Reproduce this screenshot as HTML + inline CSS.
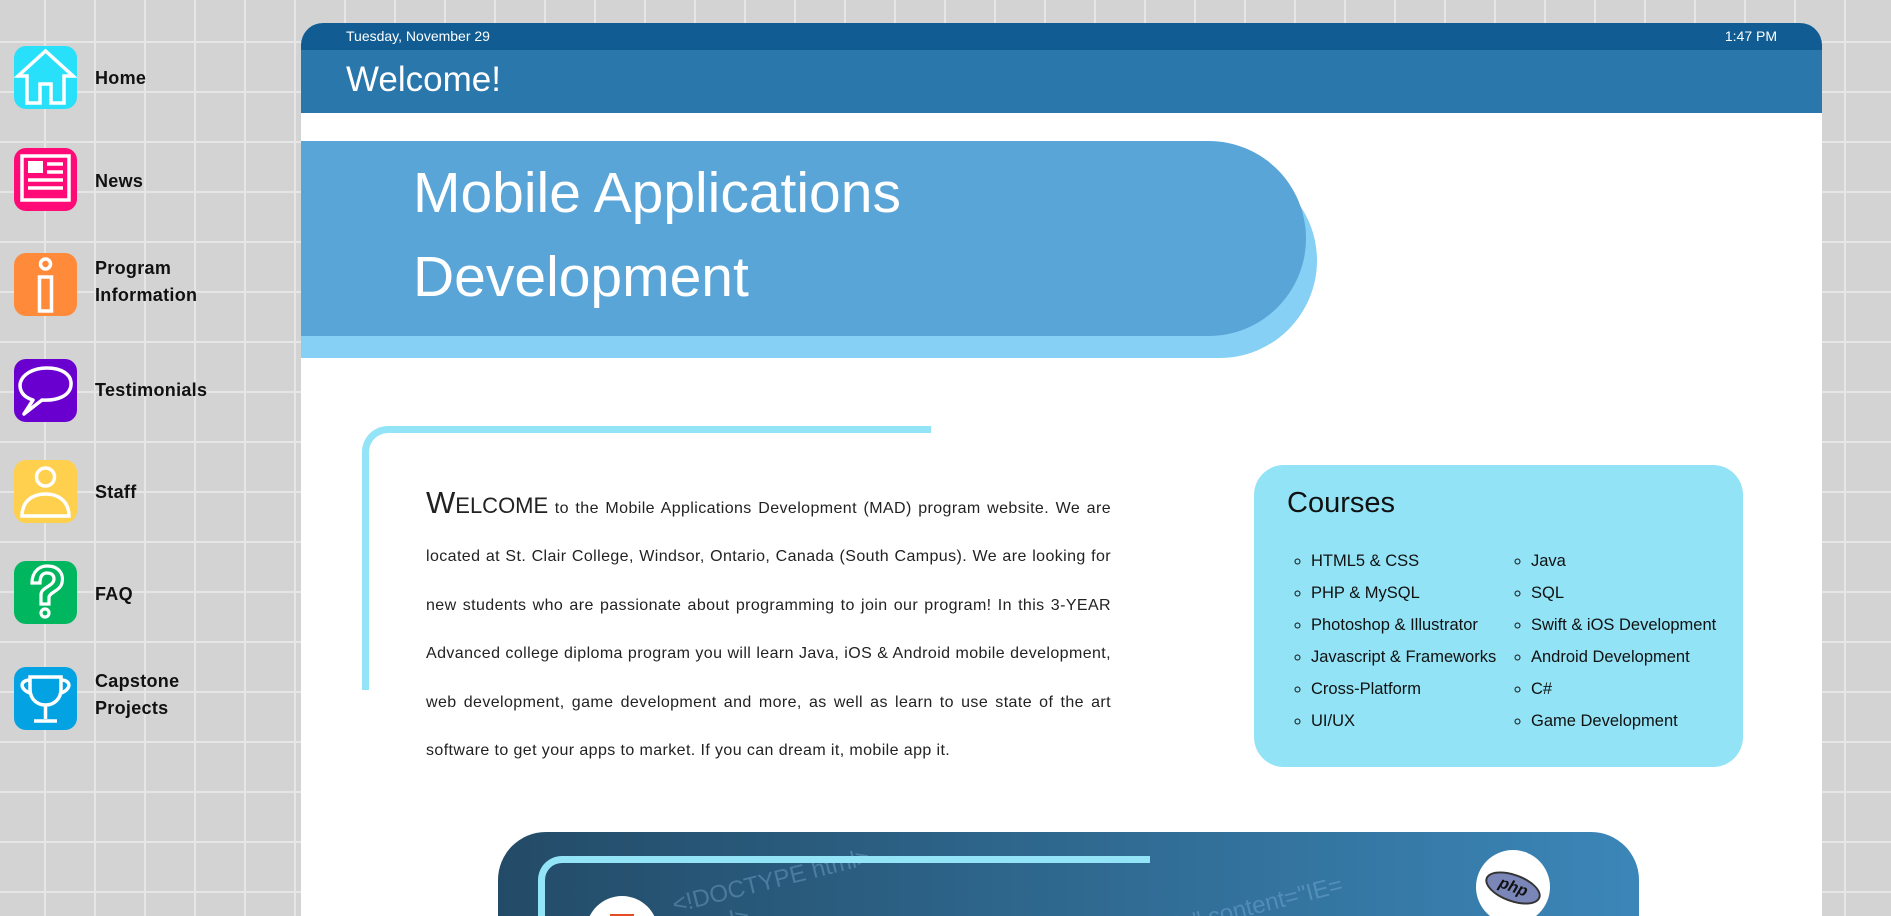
<!DOCTYPE html>
<html><head><meta charset="utf-8"><style>
*{margin:0;padding:0;box-sizing:border-box}
html,body{width:1891px;height:916px;overflow:hidden}
body{font-family:"Liberation Sans",sans-serif;background-color:#d3d3d3;
background-image:linear-gradient(90deg,#e6e6e6 2px,transparent 2px),linear-gradient(#e6e6e6 2px,transparent 2px);
background-size:50px 50px;background-position:44px 41px;position:relative}
.nav{position:absolute;left:14px;width:280px}
.nav .ic{position:absolute;left:0;width:63px;height:63px;border-radius:12px}
.nav .lb{position:absolute;left:81px;font-weight:bold;font-size:18px;line-height:27px;color:#111;white-space:nowrap;letter-spacing:0.3px}
.panel{position:absolute;left:301px;top:23px;width:1521px;height:893px;background:#fff;border-radius:22px 22px 0 0;overflow:hidden}
.datebar{height:27px;background:#115d93;color:#fff;font-size:14px;line-height:27px;padding:0 45px}
.head{height:63px;background:#2a77ab;color:#fff;font-size:35px;padding-left:45px;line-height:60px}
.bshadow{position:absolute;left:0;top:140px;width:1016px;height:195px;background:#86d0f5;border-radius:0 98px 98px 0}
.banner{position:absolute;left:0;top:118px;width:1005px;height:195px;background:#59a5d7;border-radius:0 98px 98px 0;color:#fff;font-size:57px;line-height:84px;padding:10px 0 0 112px}
.wel{position:absolute;left:61px;top:403px;width:569px;height:264px;border-top:7px solid #93e4f6;border-left:7px solid #93e4f6;border-radius:26px 0 0 0}
.wtext{position:absolute;left:125px;top:456px;width:685px;font-size:16px;letter-spacing:0.4px;line-height:48.4px;text-align:justify;color:#222}
.wtext .big{font-size:31px;letter-spacing:0}
.courses{position:absolute;left:953px;top:442px;width:489px;height:302px;background:#91e3f5;border-radius:30px;padding:22px 0 0 33px}
.courses h2{font-weight:normal;font-size:29px;color:#111;margin-bottom:12px}
.courses ul{position:absolute;top:80px;list-style:circle;font-size:16.5px;line-height:32px;color:#111}
.img{position:absolute;left:197px;top:809px;width:1141px;height:84px;border-radius:48px 48px 0 0;background:linear-gradient(90deg,#234b67,#3b86b8);overflow:hidden}
.img .ln{position:absolute;left:40px;top:24px;width:612px;height:200px;border-top:7px solid #93e4f6;border-left:7px solid #93e4f6;border-radius:24px 0 0 0}
.code{position:absolute;color:rgba(140,190,230,.35);font-size:24px;transform:rotate(-14deg);transform-origin:left}
</style></head><body>
<div class="nav" style="top:46px">
<div class="ic" style="background:#29e0fb;top:0"><svg width="63" height="63" viewBox="0 0 63 63"><path d="M4 30 L31.5 5 L59 30 H50 V57 H37 V38 H26 V57 H13 V30 Z" fill="none" stroke="#fff" stroke-width="3.5"/></svg></div><div class="lb" style="top:19px">Home</div>
</div>
<div class="nav" style="top:148px">
<div class="ic" style="background:#ff0a77;top:0"><svg width="63" height="63" viewBox="0 0 63 63"><rect x="8" y="8" width="47" height="44" fill="none" stroke="#fff" stroke-width="3.5"/><rect x="14" y="13" width="15" height="12" fill="#fff"/><path d="M33 16H49M33 24H49M14 32H49M14 40H49" stroke="#fff" stroke-width="3.5"/></svg></div><div class="lb" style="top:20px">News</div>
</div>
<div class="nav" style="top:253px">
<div class="ic" style="background:#ff8a3a;top:0"><svg width="63" height="63" viewBox="0 0 63 63"><circle cx="31.5" cy="11" r="5" fill="none" stroke="#fff" stroke-width="3.5"/><rect x="25.5" y="24" width="12" height="34" fill="none" stroke="#fff" stroke-width="3.5"/></svg></div><div class="lb" style="top:2px">Program<br>Information</div>
</div>
<div class="nav" style="top:359px">
<div class="ic" style="background:#6a00d0;top:0"><svg width="63" height="63" viewBox="0 0 63 63"><path d="M19 41 C9 38 6 32 6 26 C7 15 20 9 33 9 C47 9 58 15 57 26 C56 37 43 42 28 41 L10 55 Z" fill="none" stroke="#fff" stroke-width="3.5" stroke-linejoin="round"/></svg></div><div class="lb" style="top:18px">Testimonials</div>
</div>
<div class="nav" style="top:460px">
<div class="ic" style="background:#ffd04e;top:0"><svg width="63" height="63" viewBox="0 0 63 63"><circle cx="31.5" cy="17" r="9" fill="none" stroke="#fff" stroke-width="3.5"/><path d="M8 56 C8 40 20 34 31.5 34 C43 34 55 40 55 56 Z" fill="none" stroke="#fff" stroke-width="3.5"/></svg></div><div class="lb" style="top:19px">Staff</div>
</div>
<div class="nav" style="top:561px">
<div class="ic" style="background:#00b760;top:0"><svg width="63" height="63" viewBox="0 0 63 63"><path d="M18 22 C18 10 26 5 33 5 C45 5 50 13 48 22 C46 30 36 31 35 36 V43 H27 V33 C28 26 40 25 40 18 C40 13 36 12 33 12 C28 12 26 16 26 22 Z" fill="none" stroke="#fff" stroke-width="3.2"/><circle cx="31" cy="52" r="4" fill="none" stroke="#fff" stroke-width="3.2"/></svg></div><div class="lb" style="top:20px">FAQ</div>
</div>
<div class="nav" style="top:667px">
<div class="ic" style="background:#03a2e2;top:0"><svg width="63" height="63" viewBox="0 0 63 63"><path d="M16 10 H47 V22 C47 32 40 38 31.5 38 C23 38 16 32 16 22 Z" fill="none" stroke="#fff" stroke-width="3.5"/><path d="M16 13 C6 13 5 22 16 26 M47 13 C57 13 58 22 47 26 M31.5 38 V52 M20 54 H43" fill="none" stroke="#fff" stroke-width="3.5"/></svg></div><div class="lb" style="top:1px">Capstone<br>Projects</div>
</div>

<div class="panel">
<div class="datebar"><span>Tuesday, November 29</span><span style="float:right">1:47 PM</span></div>
<div class="head">Welcome!</div>
<div class="bshadow"></div>
<div class="banner">Mobile Applications<br>Development</div>
<div class="wel"></div>
<div class="wtext"><span class="big">W</span><span style="font-size:22px;letter-spacing:0">ELCOME</span> to the Mobile Applications Development (MAD) program website. We are located at St. Clair College, Windsor, Ontario, Canada (South Campus). We are looking for new students who are passionate about programming to join our program! In this 3-YEAR Advanced college diploma program you will learn Java, iOS &amp; Android mobile development, web development, game development and more, as well as learn to use state of the art software to get your apps to market. If you can dream it, mobile app it.</div>
<div class="courses"><h2>Courses</h2>
<ul style="left:57px"><li>HTML5 &amp; CSS</li><li>PHP &amp; MySQL</li><li>Photoshop &amp; Illustrator</li><li>Javascript &amp; Frameworks</li><li>Cross-Platform</li><li>UI/UX</li></ul>
<ul style="left:277px"><li>Java</li><li>SQL</li><li>Swift &amp; iOS Development</li><li>Android Development</li><li>C#</li><li>Game Development</li></ul>
</div>
<div class="img">
<div class="code" style="left:175px;top:60px">&lt;!DOCTYPE html&gt;</div>
<div class="code" style="left:180px;top:88px">&lt;html&gt;</div>
<div class="code" style="left:420px;top:98px">"utf-8"&gt;</div>
<div class="code" style="left:640px;top:90px">atible" content="IE=</div>
<div class="ln"></div>
<div style="position:absolute;left:88px;top:64px;width:72px;height:72px;border-radius:50%;background:#fff"><div style="position:absolute;left:24px;top:18px;width:24px;height:30px;background:#e34c26"></div></div>
<div style="position:absolute;left:978px;top:18px;width:74px;height:74px;border-radius:50%;background:#fff"><div style="position:absolute;left:8px;top:24px;width:58px;height:28px;border-radius:50%;background:#7a86b8;border:2px solid #333;transform:rotate(20deg);font:italic bold 16px 'Liberation Sans',sans-serif;text-align:center;line-height:24px;color:#111">php</div></div>
<div style="position:absolute;left:950px;top:110px;width:3px;height:60px;background:#fff;transform:rotate(55deg)"></div>
</div>
</div>
</body></html>
